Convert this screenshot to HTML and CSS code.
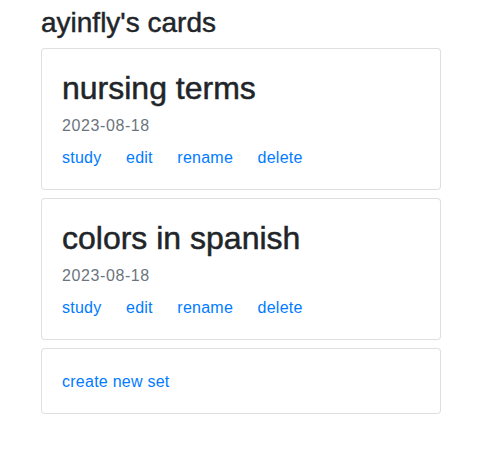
FILE: index.html
```html
<!DOCTYPE html>
<html>
<head>
<meta charset="utf-8">
<link rel="stylesheet" href="styles.css">
</head>
<body>
<main class="container">
  <h3 class="page-title">ayinfly's cards</h3>
  <div class="card">
    <div class="card-body">
      <h2 class="card-title">nursing terms</h2>
      <p class="card-subtitle">2023-08-18</p>
      <div class="links">
        <a href="#" class="card-link">study</a>
        <a href="#" class="card-link">edit</a>
        <a href="#" class="card-link">rename</a>
        <a href="#" class="card-link">delete</a>
      </div>
    </div>
  </div>
  <div class="card">
    <div class="card-body">
      <h2 class="card-title">colors in spanish</h2>
      <p class="card-subtitle">2023-08-18</p>
      <div class="links">
        <a href="#" class="card-link">study</a>
        <a href="#" class="card-link">edit</a>
        <a href="#" class="card-link">rename</a>
        <a href="#" class="card-link">delete</a>
      </div>
    </div>
  </div>
  <div class="card">
    <div class="card-body">
      <div class="links">
        <a href="#" class="card-link">create new set</a>
      </div>
    </div>
  </div>
</main>
</body>
</html>
```
FILE: styles.css
```css
html, body {
  margin: 0;
  padding: 0;
  background: #fff;
}
body {
  font-family: "Liberation Sans", Arial, sans-serif;
  font-size: 16px;
  line-height: 1.5;
  color: #212529;
}
.container {
  width: 400px;
  margin-left: 41px;
  padding-top: 6px;
}
.page-title {
  font-size: 28px;
  font-weight: 500;
  line-height: 1.2;
  margin: 0 0 8px 0;
  -webkit-text-stroke: 0.45px #212529;
}
.card {
  border: 1px solid rgba(0, 0, 0, 0.125);
  border-radius: 4px;
  margin-bottom: 8px;
  background: #fff;
}
.card-body {
  padding: 20px;
}
.card-title {
  font-size: 32px;
  font-weight: 500;
  line-height: 1.2;
  margin: 0 0 12px 0;
  -webkit-text-stroke: 0.5px #212529;
}
.card-subtitle {
  margin: -5px 0 7px 0;
  color: #6c757d;
  letter-spacing: 0.6px;
}
.links {
  display: flex;
}
.card-link {
  display: block;
  padding-top: 1px;
  line-height: 23px;
  color: #007bff;
  text-decoration: none;
  letter-spacing: 0.25px;
}
.links .card-link + .card-link {
  margin-left: 24.5px;
}
```
